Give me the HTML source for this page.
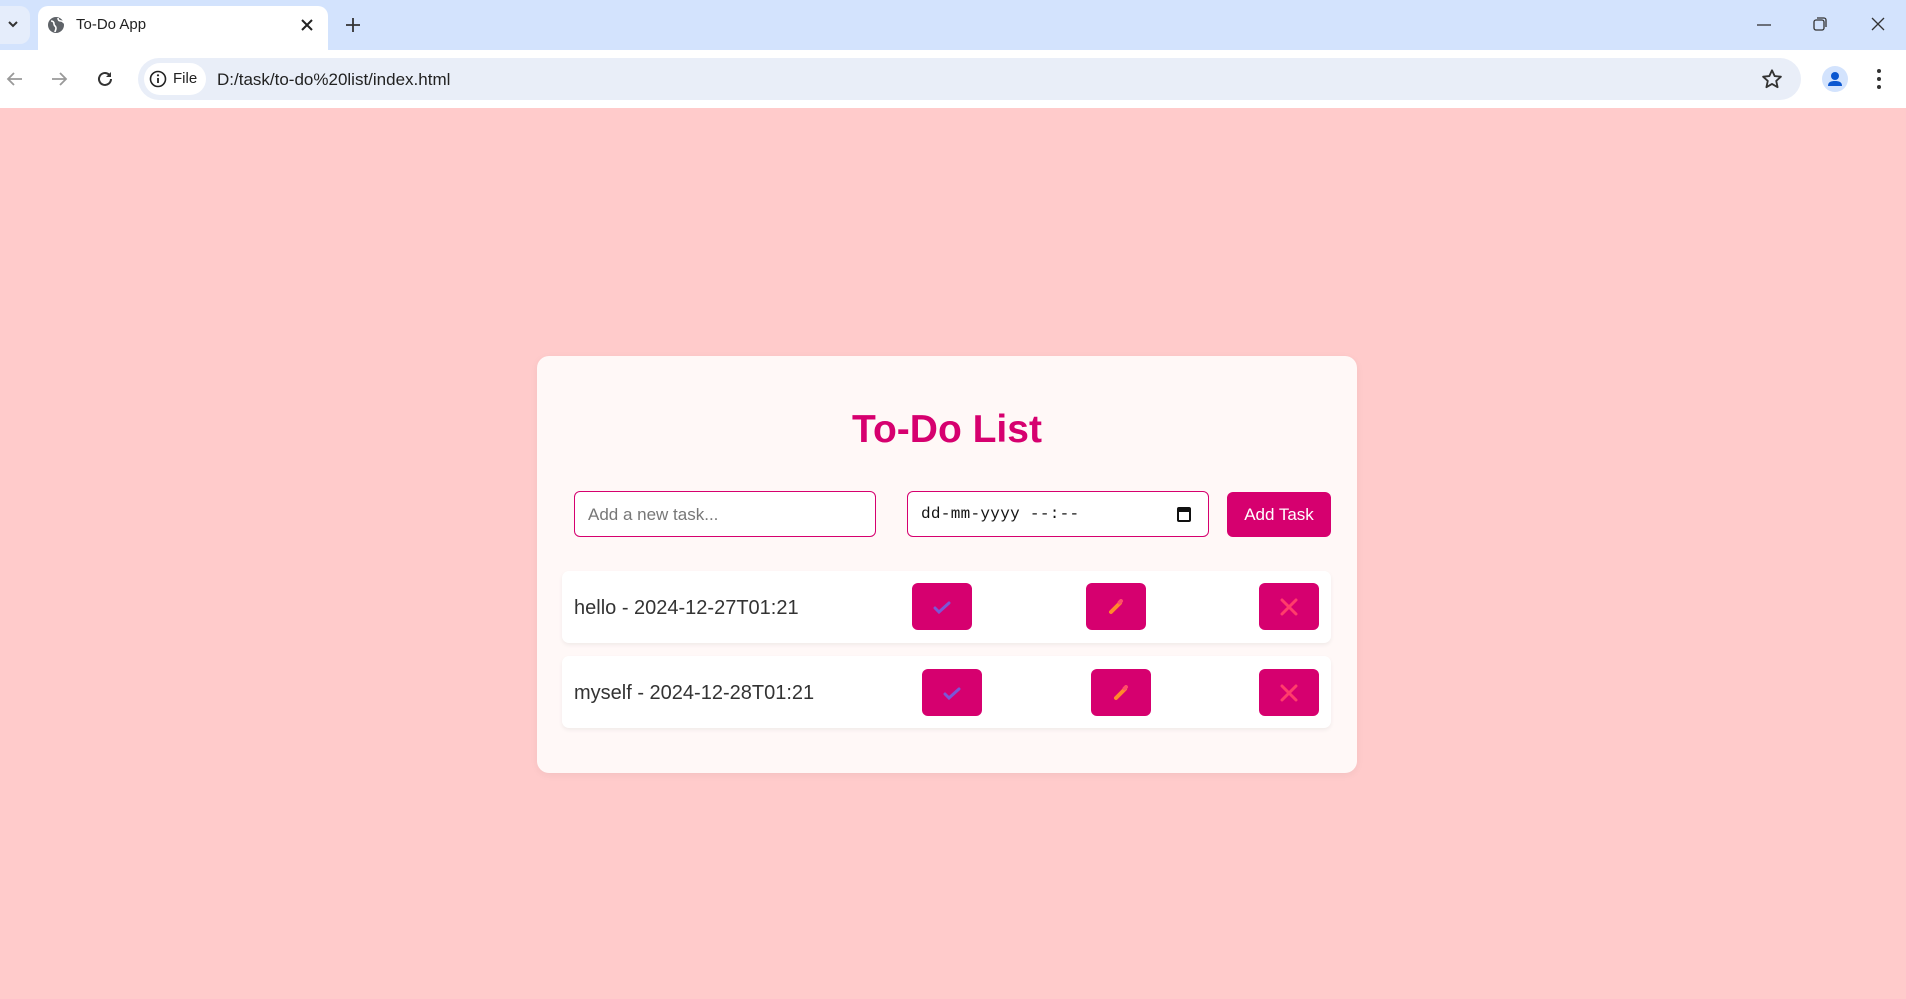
<!DOCTYPE html>
<html><head><meta charset="utf-8"><style>
*{margin:0;padding:0;box-sizing:border-box}
body{width:1906px;height:999px;overflow:hidden;font-family:"Liberation Sans",Arial,sans-serif;background:#ffcbcb;position:relative}
.abs{position:absolute}
.tabbar{left:0;top:0;width:1906px;height:50px;background:#d3e3fd}
.tab{left:38px;top:6px;width:290px;height:44px;background:#fff;border-radius:10px 10px 0 0}
.toolbar{left:0;top:50px;width:1906px;height:58px;background:#fff}
.omni{left:138px;top:58px;width:1663px;height:42px;background:#e9eef8;border-radius:21px}
.chip{left:144px;top:63px;width:62px;height:32px;background:#fff;border-radius:16px}
.card{left:537px;top:356px;width:820px;height:417px;background:#fff8f7;border-radius:12px;box-shadow:0 2px 8px rgba(0,0,0,.05)}
h1{position:absolute;left:537px;width:820px;top:408px;text-align:center;font-size:39px;color:#d6006f;font-weight:bold}
.inp{height:46px;top:491px;border:1.5px solid #d6006f;border-radius:6px;background:#fff;font-size:17px;padding-left:13px;line-height:45px}
.btn{background:#d6006f;border-radius:6px}
.row{left:562px;width:769px;height:72px;background:#fff;border-radius:7px;box-shadow:0 2px 4px rgba(0,0,0,.06)}
.rt{font-size:20px;color:#333;left:574px}
.sb{width:60px;height:47px;background:#d6006f;border-radius:6px;display:flex;align-items:center;justify-content:center}
</style></head><body>
<div class="abs tabbar"></div>
<div class="abs" style="left:0;top:6px;width:30px;height:38px;background:#e5edfb;border-radius:0 10px 10px 0"></div>
<svg class="abs" style="left:7px;top:19px" width="12" height="10"><path d="M2 3l4 4 4-4" stroke="#333" stroke-width="2" fill="none"/></svg>
<div class="abs tab"></div>
<svg class="abs" style="left:47px;top:16px" width="18" height="18" viewBox="0 0 18 18"><circle cx="9" cy="9" r="8" fill="#5f6368"/><path d="M4 5c2 0 3 1 3 3s2 2 2 4-1 3-1 4M11 2c0 2 1 3 3 3s2 1 3 2" stroke="#fff" stroke-width="1.6" fill="none"/></svg>
<div class="abs" style="left:76px;top:16px;font-size:15px;color:#222">To-Do App</div>
<svg class="abs" style="left:301px;top:19px" width="12" height="12"><path d="M1 1l10 10M11 1L1 11" stroke="#222" stroke-width="2"/></svg>
<svg class="abs" style="left:346px;top:18px" width="14" height="14"><path d="M7 0v14M0 7h14" stroke="#333" stroke-width="1.8"/></svg>
<svg class="abs" style="left:1757px;top:24px" width="14" height="2"><path d="M0 1h14" stroke="#333" stroke-width="1.3"/></svg>
<svg class="abs" style="left:1813px;top:17px" width="14" height="14"><rect x="1" y="3" width="10" height="10" rx="2" stroke="#333" fill="none" stroke-width="1.3"/><path d="M4 1h7a2 2 0 0 1 2 2v7" stroke="#333" fill="none" stroke-width="1.3"/></svg>
<svg class="abs" style="left:1871px;top:17px" width="14" height="14"><path d="M1 1l12 12M13 1L1 13" stroke="#333" stroke-width="1.3"/></svg>
<div class="abs toolbar"></div>
<svg class="abs" style="left:6px;top:70px" width="18" height="18"><path d="M16 9H3M8 3L2 9l6 6" stroke="#999" stroke-width="1.8" fill="none"/></svg>
<svg class="abs" style="left:50px;top:70px" width="18" height="18"><path d="M2 9h13M10 3l6 6-6 6" stroke="#999" stroke-width="1.8" fill="none"/></svg>
<svg class="abs" style="left:96px;top:70px" width="18" height="18"><path d="M15 9a6 6 0 1 1-2-4.5" stroke="#333" stroke-width="2" fill="none"/><path d="M15 2v5h-5" fill="#333"/></svg>
<div class="abs omni"></div>
<div class="abs chip"></div>
<svg class="abs" style="left:149px;top:70px" width="18" height="18"><circle cx="9" cy="9" r="7.5" stroke="#222" stroke-width="1.6" fill="none"/><path d="M9 8v5" stroke="#222" stroke-width="1.8"/><circle cx="9" cy="5.3" r="1.1" fill="#222"/></svg>
<div class="abs" style="left:173px;top:70px;font-size:15px;color:#222">File</div>
<div class="abs" style="left:217px;top:70px;font-size:17px;color:#222">D:/task/to-do%20list/index.html</div>
<svg class="abs" style="left:1761px;top:68px" width="22" height="22" viewBox="0 0 24 24"><path d="M12 2.5l2.9 6.3 6.8.7-5.1 4.6 1.5 6.8L12 17.4 5.9 20.9l1.5-6.8L2.3 9.5l6.8-.7z" stroke="#333" stroke-width="2" fill="none" stroke-linejoin="round"/></svg>
<div class="abs" style="left:1822px;top:66px;width:26px;height:26px;border-radius:13px;background:#d3e3fd"></div>
<svg class="abs" style="left:1822px;top:66px" width="26" height="26"><circle cx="13" cy="10" r="4" fill="#0b57d0"/><path d="M6 20c0-4 3-5 7-5s7 1 7 5z" fill="#0b57d0"/></svg>
<svg class="abs" style="left:1876px;top:68px" width="6" height="22"><circle cx="3" cy="3" r="2" fill="#333"/><circle cx="3" cy="11" r="2" fill="#333"/><circle cx="3" cy="19" r="2" fill="#333"/></svg>

<div class="abs card"></div>
<h1>To-Do List</h1>
<div class="abs inp" style="left:574px;width:302px;color:#777">Add a new task...</div>
<div class="abs inp" style="left:907px;width:302px;font-family:'Liberation Mono',monospace;font-size:16px;color:#111;letter-spacing:0.3px">dd-mm-yyyy --:--</div>
<svg class="abs" style="left:1177px;top:506px" width="14" height="16"><rect x="1" y="2" width="12" height="13" rx="1" stroke="#111" stroke-width="2" fill="none"/><rect x="1" y="2" width="12" height="4" fill="#111"/></svg>
<div class="abs btn" style="left:1227px;top:492px;width:104px;height:45px;color:#fff;font-size:17px;text-align:center;line-height:45px">Add Task</div>

<div class="abs row" style="top:571px"></div>
<div class="abs rt" style="top:597px">hello - 2024-12-27T01:21</div>
<div class="abs row" style="top:656px"></div>
<div class="abs rt" style="top:682px">myself - 2024-12-28T01:21</div>

<div class="abs sb" style="left:912px;top:583px"><svg width="18" height="14"><path d="M2 8l4 4 10-9" stroke="#7b57d6" stroke-width="3" fill="none" stroke-linecap="round"/></svg></div>
<div class="abs sb" style="left:1086px;top:583px"><svg width="16" height="16"><path d="M3 13l9-9" stroke="#ff8a2a" stroke-width="4" stroke-linecap="round"/><path d="M11.5 3.5l1.5-1.5" stroke="#ff4d6a" stroke-width="4" stroke-linecap="round"/></svg></div>
<div class="abs sb" style="left:1259px;top:583px"><svg width="18" height="18"><path d="M2 2l14 14M16 2L2 16" stroke="#ff3d6b" stroke-width="3" stroke-linecap="round"/></svg></div>

<div class="abs sb" style="left:922px;top:669px"><svg width="18" height="14"><path d="M2 8l4 4 10-9" stroke="#7b57d6" stroke-width="3" fill="none" stroke-linecap="round"/></svg></div>
<div class="abs sb" style="left:1091px;top:669px"><svg width="16" height="16"><path d="M3 13l9-9" stroke="#ff8a2a" stroke-width="4" stroke-linecap="round"/><path d="M11.5 3.5l1.5-1.5" stroke="#ff4d6a" stroke-width="4" stroke-linecap="round"/></svg></div>
<div class="abs sb" style="left:1259px;top:669px"><svg width="18" height="18"><path d="M2 2l14 14M16 2L2 16" stroke="#ff3d6b" stroke-width="3" stroke-linecap="round"/></svg></div>
</body></html>
